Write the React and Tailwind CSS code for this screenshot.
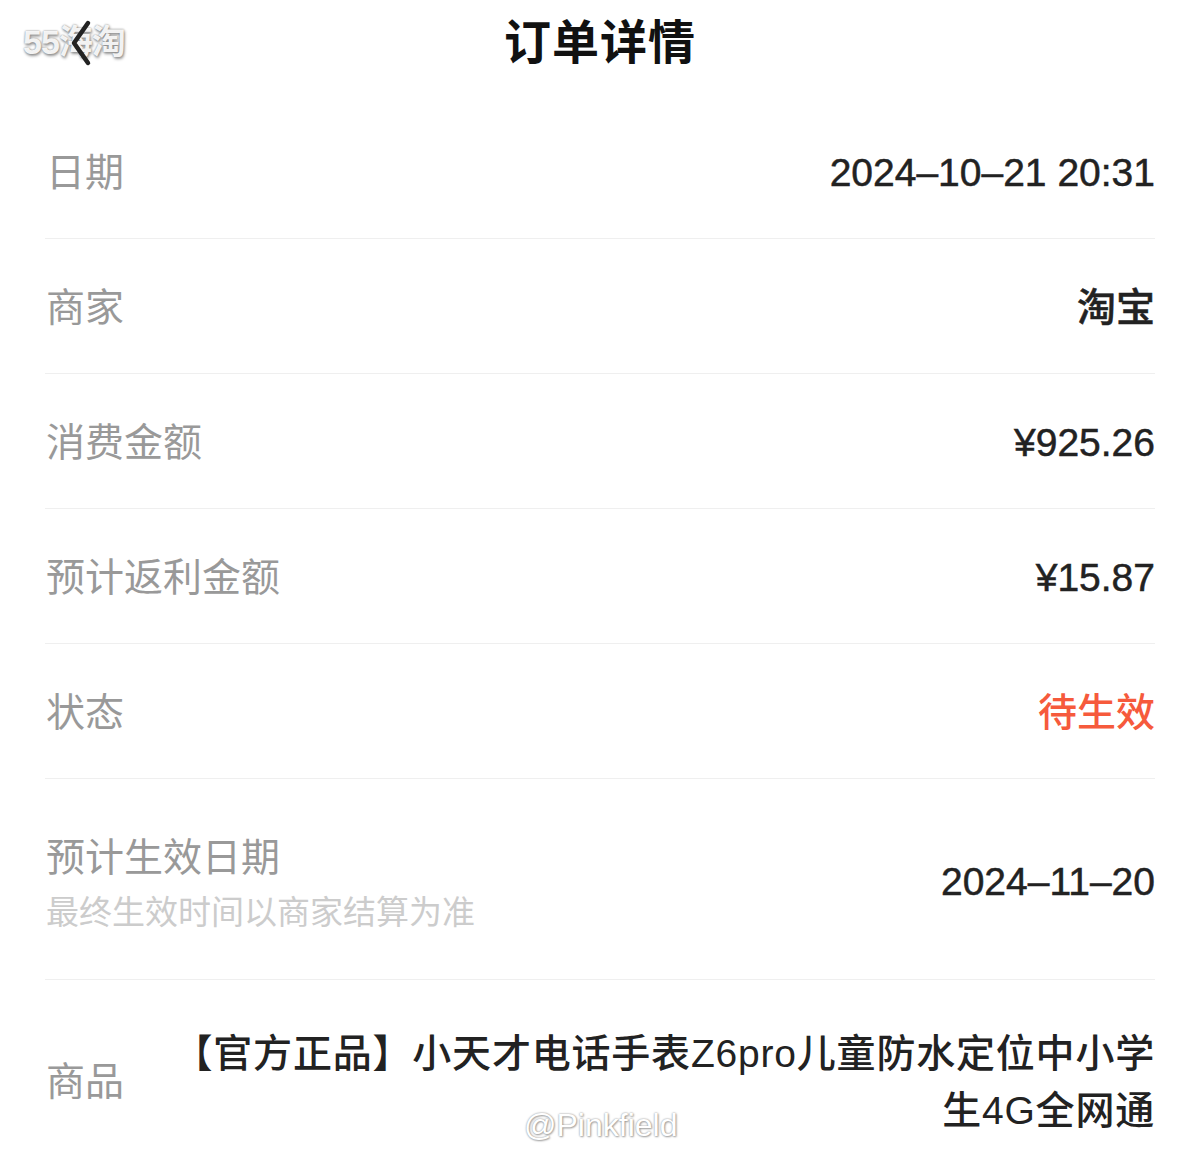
const FONT = "font-['Liberation_Sans','Noto_Sans_CJK_SC',sans-serif]"

const ROWS = [
  { label: '日期', value: '2024–10–21 20:31' },
  { label: '商家', value: '淘宝' },
  { label: '消费金额', value: '¥925.26' },
  { label: '预计返利金额', value: '¥15.87' },
  { label: '状态', value: '待生效', accent: true },
]

function Row({ label, value, accent }) {
  return (
    <div className="h-[135px] flex items-center justify-between border-b border-[#efefef] pl-[1px] pt-[5px]">
      <span className="text-[39px] text-[#999999]">{label}</span>
      <span className={accent
        ? 'text-[39px] font-medium text-[#f65a3c]'
        : 'text-[39px] font-medium text-[#222222] [-webkit-text-stroke:0.5px_#222222]'}>{value}</span>
    </div>
  )
}

export default function App() {
  return (
    <div className={`relative w-[1200px] h-[1172px] overflow-hidden bg-white ${FONT}`}>
      {/* header */}
      <div className="relative h-[104px] flex items-start justify-center pt-[12px]">
        <span className="absolute left-[23px] top-[21px] text-[34px] leading-[42px] font-bold text-white/90 tracking-[-1px] [text-shadow:0_0_2px_#777,1px_2px_3px_#999]">55海淘</span>
        <button className="absolute z-10 left-[66px] top-[19px] text-[#222]">
          <svg width="30" height="48" viewBox="0 0 30 48" fill="none">
            <path d="M22 4 L8 24 L22 44" stroke="currentColor" strokeWidth="4.5" strokeLinecap="round" strokeLinejoin="round" />
          </svg>
        </button>
        <h1 className="text-[47px] leading-[62px] font-bold text-[#111111] tracking-[1px]">订单详情</h1>
      </div>

      <div className="mx-[45px] flex flex-col">
        {ROWS.map((r) => <Row key={r.label} {...r} />)}

        <div className="h-[201px] flex items-center justify-between border-b border-[#efefef] pl-[1px] pt-[10px]">
          <div className="flex flex-col">
            <span className="text-[39px] leading-[50px] text-[#999999]">预计生效日期</span>
            <span className="mt-[8px] text-[33px] leading-[44px] text-[#cccccc]">最终生效时间以商家结算为准</span>
          </div>
          <span className="text-[39px] font-medium text-[#222222] [-webkit-text-stroke:0.5px_#222222] -mt-[4px]">2024–11–20</span>
        </div>

        <div className="flex items-center justify-between pl-[1px] pt-[45px]">
          <span className="text-[39px] text-[#999999] shrink-0">商品</span>
          <p className="text-right text-[39px] leading-[57px] font-medium text-[#222222] tracking-[0.8px]">
            【官方正品】小天才电话手表Z6pro儿童防水定位中小学<br />生4G全网通
          </p>
        </div>
      </div>

      <span className="absolute left-[524px] top-[1104px] text-[32px] leading-[42px] text-white [text-shadow:0_0_2px_#888,1px_1px_2px_#aaa]">@Pinkfield</span>
    </div>
  )
}
